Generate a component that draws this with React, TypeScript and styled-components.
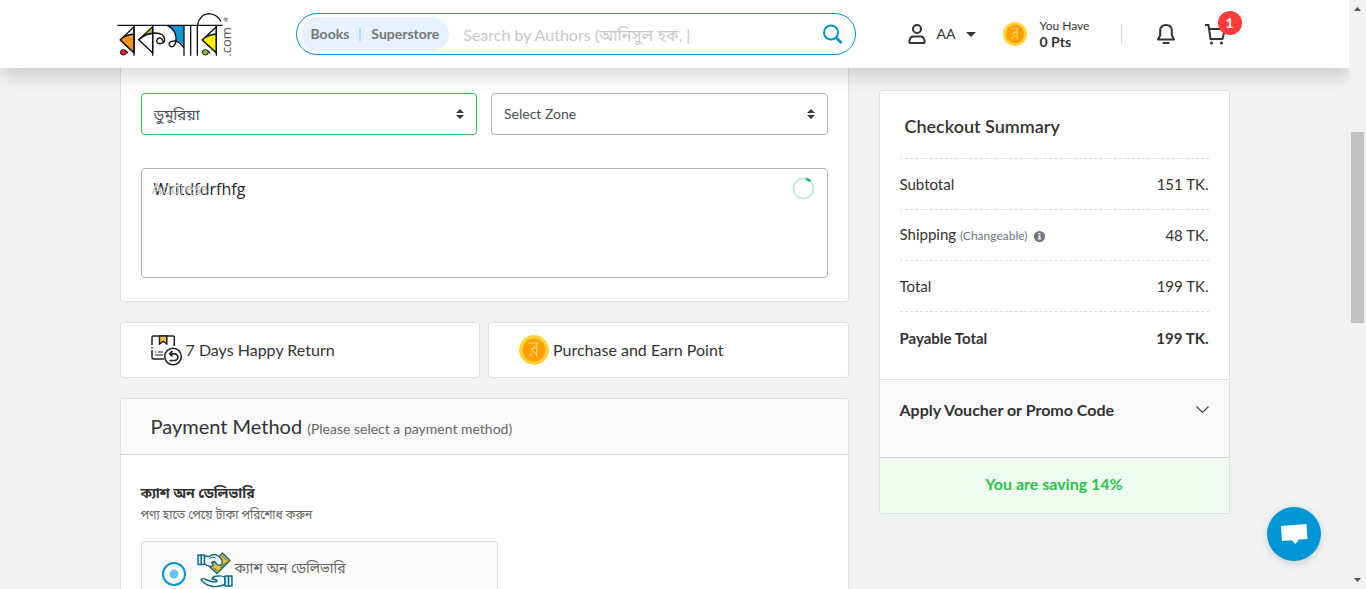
import React from "react";
import styled, { createGlobalStyle } from "styled-components";

const Global = createGlobalStyle`
  *, *::before, *::after { box-sizing: border-box; }
  body {
    margin: 0;
    background: #f1f2f4;
    color: #333;
    font-family: Lato, "Noto Sans Bengali", "Noto Sans", sans-serif;
    font-size: 16px;
    line-height: 24px;
  }
  h1, h2, h3, p { margin: 0; font-weight: 400; }
  button, input, select, textarea { font: inherit; color: inherit; margin: 0; }
  button { border: 0; padding: 0; background: none; cursor: pointer; }
  a { color: inherit; text-decoration: none; }
  svg { display: block; flex: none; }
`;

const Shell = styled.div`
  display: flex;
  height: 100vh;
  overflow: hidden;
`;

const Page = styled.div`
  flex: 1;
  min-width: 0;
  overflow: hidden;
`;

/* header */

const Header = styled.header`
  position: relative;
  z-index: 2;
  background: #fff;
  box-shadow: 0 8px 16px rgba(0, 0, 0, 0.15);
`;

const HeaderInner = styled.div`
  display: flex;
  align-items: center;
  max-width: 1116px;
  height: 68px;
  margin: 0 auto;
`;

const Search = styled.form`
  flex: 1;
  display: flex;
  align-items: center;
  min-width: 0;
  height: 42px;
  margin: 0 52px 0 62px;
  padding: 0 12px 0 4px;
  border: 1px solid #0095d5;
  border-radius: 21px;
`;

const Scopes = styled.div`
  display: flex;
  align-items: center;
  gap: 10px;
  height: 34px;
  padding: 0 10px;
  border-radius: 17px;
  background: #e6f2ff;
  color: #777;
  font-size: 14px;
  font-weight: 700;
`;

const ScopeRule = styled.span`
  width: 2px;
  height: 13px;
  background: #b3d4fc;
`;

const SearchInput = styled.input`
  flex: 1;
  min-width: 0;
  height: 38px;
  padding: 0 14px;
  border: 0;
  outline: 0;
  background: none;
  &::placeholder { color: #c8c8c8; opacity: 1; }
`;

const Actions = styled.div`
  display: flex;
  align-items: center;
`;

const UserButton = styled.button`
  display: flex;
  align-items: center;
  width: 67px;
  margin-right: 28px;
  gap: 11px;
  font-size: 14px;
`;

const Caret = styled.span`
  margin-left: auto;
  border: 5px solid transparent;
  border-top: 5px solid #333;
  border-bottom: 0;
`;

const Points = styled.a`
  display: flex;
  align-items: center;
  width: 118px;
  gap: 13px;
  font-size: 12px;
  line-height: 16px;
`;

const PointsValue = styled.strong`
  display: block;
  font-size: 14px;
`;

const ActionRule = styled.span`
  width: 1px;
  height: 20px;
  margin-right: 35px;
  background: #d8d8d8;
`;

const CartButton = styled.button`
  position: relative;
  margin: 0 7px 0 30px;
`;

const Badge = styled.span`
  position: absolute;
  top: -12px;
  right: -16px;
  width: 24px;
  height: 24px;
  border-radius: 50%;
  background: #ff3b3b;
  color: #fff;
  font-size: 14px;
  font-weight: 700;
  line-height: 23px;
`;

/* page columns */

const Columns = styled.main`
  display: grid;
  grid-template-columns: minmax(0, 1fr) 351px;
  gap: 30px;
  align-items: start;
  max-width: 1110px;
  margin: 0 auto;
`;

const Stack = styled.div`
  display: grid;
  gap: 20px;
`;

const Card = styled.section`
  border: 1px solid #dedfe1;
  border-radius: 3px;
  background: #fff;
`;

const AddressCard = styled(Card)`
  border-top: 0;
  border-radius: 0 0 3px 3px;
  padding: 25px 20px 23px;
`;

const FieldRow = styled.div`
  display: grid;
  grid-template-columns: 1fr 1fr;
  gap: 14px;
  margin-bottom: 33px;
`;

const SelectWrap = styled.div`
  position: relative;
`;

const Select = styled.select<{ $valid?: boolean }>`
  display: block;
  width: 100%;
  height: 42px;
  padding: 0 40px 0 12px;
  appearance: none;
  border: 1px solid ${(p) => (p.$valid ? "#2dbe4a" : "#b0b0b0")};
  border-radius: 4px;
  background: #fff;
  color: #495057;
  font-size: ${(p) => (p.$valid ? "15px" : "14px")};
`;

const SelectArrow = styled.svg`
  position: absolute;
  top: 16px;
  right: 13px;
  pointer-events: none;
`;

const AddressWrap = styled.div`
  position: relative;
`;

const AddressText = styled.textarea`
  display: block;
  width: 100%;
  height: 110px;
  padding: 8px 12px;
  border: 1px solid #b0b0b0;
  border-radius: 4px;
  resize: none;
  color: #212529;
  font-family: "Open Sans", sans-serif;
`;

const AddressLabel = styled.label`
  position: absolute;
  top: 8px;
  left: 11px;
  color: #c8c8c8;
  pointer-events: none;
`;

const Spinner = styled.svg`
  position: absolute;
  top: 9px;
  right: 13px;
`;

const Perks = styled.div`
  display: grid;
  grid-template-columns: 1fr 1fr;
  gap: 8px;
`;

const Perk = styled(Card)`
  display: flex;
  align-items: center;
  gap: 4px;
  height: 56px;
  padding: 0 30px;
`;

const CardHead = styled.div`
  display: flex;
  align-items: baseline;
  gap: 5px;
  height: 56px;
  padding: 15px 30px 0;
  border-bottom: 1px solid #dedfe1;
  background: #fafafa;
`;

const CardTitle = styled.h2`
  font-size: 20px;
`;

const CardHint = styled.span`
  color: #666;
  font-size: 14px;
`;

const PayBody = styled.div`
  padding: 26px 20px;
`;

const PayName = styled.h3`
  font-size: 14px;
  font-weight: 700;
`;

const PayNote = styled.p`
  color: #666;
  font-size: 12px;
  line-height: 20px;
`;

const PayOption = styled.label`
  display: flex;
  width: 357px;
  max-width: 100%;
  margin-top: 16px;
  padding: 10px 20px 14px;
  border: 1px solid #dedfe1;
  border-radius: 3px;
  background: #fafafa;
  color: #666;
`;

const Radio = styled.input`
  appearance: none;
  width: 24px;
  height: 24px;
  margin: 10px 11px 0 0;
  border: 2px solid #0095d5;
  border-radius: 50%;
  background: #fff radial-gradient(circle, #6ac1e9 4px, transparent 5px);
`;

const PayLabel = styled.span`
  margin: 4px 0 0 2px;
  font-size: 14px;
`;

/* checkout summary */

const Summary = styled(Card)`
  margin-top: 22px;
  overflow: hidden;
`;

const SummaryTitle = styled.h2`
  padding: 23px 25px 20px;
  font-size: 18px;
  font-weight: 600;
`;

const Totals = styled.table`
  width: calc(100% - 40px);
  margin: 0 20px 14px;
  border-collapse: collapse;
  font-size: 15px;
  th, td {
    height: 51px;
    padding: 0;
    border-top: 1px dashed #dcdfe2;
    font-weight: 400;
    text-align: left;
  }
  td { text-align: right; }
  tr:last-child > * {
    height: 53px;
    font-weight: 700;
  }
`;

const Changeable = styled.span`
  display: inline-flex;
  align-items: center;
  gap: 6px;
  color: #6c757d;
  font-size: 12px;
`;

const Voucher = styled.button`
  display: flex;
  align-items: center;
  justify-content: space-between;
  width: 100%;
  height: 78px;
  padding: 0 20px 16px;
  border-top: 1px solid #dedfe1;
  background: #f8f9fb;
  font-weight: 700;
`;

const Saving = styled.p`
  height: 56px;
  padding-top: 14px;
  border-top: 1px solid #d0dcd4;
  background: #effdf1;
  color: #2dc24c;
  font-weight: 700;
  text-align: center;
`;

/* window furniture */

const Chat = styled.button`
  position: fixed;
  right: 45px;
  bottom: 28px;
  display: grid;
  place-items: center;
  width: 54px;
  height: 54px;
  border-radius: 50%;
  background: #0095d5;
  box-shadow: 0 2px 8px rgba(0, 0, 0, 0.15);
`;

const ScrollTrack = styled.div`
  display: flex;
  flex-direction: column;
  align-items: center;
  width: 17px;
  padding: 7px 0;
  background: #f1f1f1;
`;

const ScrollThumb = styled.div`
  width: 13px;
  height: 191px;
  margin: 121px 0 auto;
  background: #c1c1c1;
`;

const ScrollArrow = ({ down }: { down?: boolean }) => (
  <svg width="7" height="4" viewBox="0 0 7 4">
    <path d={down ? "M0 0h7L3.5 4z" : "M0 4h7L3.5 0z"} fill="#505050" />
  </svg>
);

const Logo = () => (
  <svg width="117" height="45" viewBox="52 35 351 135" overflow="visible" role="img" aria-label="Rokomari.com">
    <g stroke="#111" strokeWidth="4" fill="none" strokeLinejoin="round">
      <path d="M103 79 62 119 103 157z" fill="#fff" />
      <path d="M62 119Q74 104 103 101V157z" fill="#f7941d" />
      <path d="M103 77V166" />
      <path d="M159 79 117 118 159 157z" fill="#fff" />
      <path d="M159 80 132 105Q144 99 159 100z" fill="#8cc63f" strokeWidth="3" />
      <path d="M117 118Q140 99 165 98Q196 98 195 120Q190 132 177 130Q167 124 174 115Q184 110 188 118Q188 125 196 124M159 77V166" />
      <path d="M201 76H253V137Q241 121 229 122Q234 98 201 76z" fill="#0f97d7" stroke="none" />
      <path d="M204 76Q231 88 229 121Q226 141 214 139Q203 131 213 124Q236 116 252 142M253 77V166" />
      <path d="M273 77V166M293 166V76Q299 42 327 40Q352 41 364 64" />
      <path d="M350 79 308 119 350 157z" fill="#fff" />
      <path d="M308 119Q320 104 350 101V157z" fill="#fff200" />
      <path d="M350 77V166M53 75H369" />
      <ellipse cx="71" cy="156" rx="9" ry="8" fill="#ed1c24" strokeWidth="3" />
      <path d="M78 151Q86 153 84 160" strokeWidth="3" />
      <ellipse cx="317" cy="156" rx="9" ry="8" fill="#8cc63f" strokeWidth="3" />
      <path d="M324 151Q332 153 330 160" strokeWidth="3" />
    </g>
    <text transform="translate(395 169) rotate(-90)" fontSize="39" fontFamily="Open Sans, sans-serif" fill="#555">.com</text>
    <text x="371" y="64" fontSize="18" fill="#333">®</text>
  </svg>
);

const Coin = ({ size }: { size: number }) => (
  <svg width={size} height={size} viewBox="0 0 24 24">
    <circle cx="12" cy="12" r="12" fill="#ffd43b" />
    <circle cx="12" cy="12" r="9.2" fill="#ff9f00" />
    <circle cx="12" cy="12" r="8.8" fill="none" stroke="#f7ab1b" strokeWidth=".6" />
    <path d="M7.500 6.400h8.200M14.200 6.400V17.500M14.200 7.500 9.800 11.600 14.200 15.800M9.800 11.600l4.400-1.800M10.600 16a1 1 0 1 1-.2-.9" fill="none" stroke="#ffe3a0" strokeWidth=".7" />
  </svg>
);

const ReturnIcon = () => (
  <svg width="31" height="31" viewBox="0 0 31 31" fill="none" stroke="#222" strokeWidth="1.5">
    <path d="M1 10V2.200Q1 1 2.200 1H22Q23.300 1 23.300 2.200V11M1 12v1.500M1 15V22.500Q1 24 2.500 24H13" />
    <path d="M8.500 1H15.800V9L12.200 6.200 8.500 9z" fill="#fbc02d" />
    <path d="M4 17h1.500M7 17h5M4 20h8" strokeWidth="1.100" />
    <circle cx="22" cy="21.500" r="8.300" fill="#fff" />
    <path d="M18.500 25.500H23.500A3.300 3.300 0 0 0 23.500 18.800H19M21.500 16 18.700 18.800 21.500 21.500" strokeWidth="1.700" />
  </svg>
);

const CashIcon = () => (
  <svg width="36" height="36" viewBox="0 0 36 36" fill="none" stroke="#17657f" strokeWidth="1.400" strokeLinejoin="round" strokeLinecap="round">
    <path d="M14 13 25.500 1 33 8.500 20 21.500 13 15z" fill="#f4bf27" />
    <path d="M25.500 4 30 8.500M17 16 20 18.800M29 10.500 23.500 16" strokeWidth="1" />
    <path d="M7 4 12 4.500Q16 1.500 19.500 3L23 5.500Q26 8 25 12Q23 14.500 20 12.500L17.500 9.500 14.500 10.500Q18 13.500 14.500 14.500Q11 15 7 11.500z" fill="#eef9fd" />
    <path d="M12.500 6.500Q15 4 18 5.500" strokeWidth="1" />
    <path d="M1 3H7.500V12.500H1zM4.200 3V12.500" fill="#c9eefa" />
    <path d="M4 28Q5 25.500 9 27.500L14 29.500Q19 30.500 20 29Q19 27 15 27Q16 24 21 24Q25 23.500 28 25.500V32.500Q22 35 16 34.500Q9 33.500 4 28z" fill="#eef9fd" />
    <path d="M28 24H35V34H28zM31.500 24V34" fill="#c9eefa" />
  </svg>
);

const UpDown = () => (
  <SelectArrow width="8" height="10" viewBox="0 0 8 10">
    <path d="M0 4 4 0 8 4zM0 6 4 10 8 6z" fill="#343a40" />
  </SelectArrow>
);

export default function App() {
  return (
    <Shell>
      <Global />
      <Page>
        <Header>
          <HeaderInner>
            <a href="#home"><Logo /></a>
            <Search role="search" onSubmit={(e) => e.preventDefault()}>
              <Scopes>
                <a href="#books">Books</a>
                <ScopeRule />
                <a href="#superstore">Superstore</a>
              </Scopes>
              <SearchInput type="text" aria-label="Search" placeholder="Search by Authors (আনিসুল হক, |" />
              <button type="submit" aria-label="Search">
                <svg width="21" height="21" viewBox="0 0 21 21" fill="none" stroke="#0095d5" strokeWidth="2">
                  <circle cx="9" cy="8.500" r="7" />
                  <path d="m14 13.500 5.500 5.500" strokeWidth="2.600" />
                </svg>
              </button>
            </Search>
            <Actions>
              <UserButton type="button">
                <svg width="18" height="20" viewBox="0 0 18 20" fill="none" stroke="#333" strokeWidth="2">
                  <circle cx="9" cy="5" r="4" />
                  <path d="M5.500 12.500h7q3 0 3.700 3l.5 1.500q.3 2-1.700 2H3q-2 0-1.700-2l.5-1.500q.7-3 3.700-3z" />
                </svg>
                AA
                <Caret />
              </UserButton>
              <Points href="#points">
                <Coin size={24} />
                <span>You Have<PointsValue>0 Pts</PointsValue></span>
              </Points>
              <ActionRule />
              <button type="button" aria-label="Notifications">
                <svg width="18" height="22" viewBox="0 0 18 22" fill="none" stroke="#333" strokeWidth="2">
                  <path d="M1 16.500h16l-2.200-4.200V7.500Q14.500 2 9 2T3.200 7.500v4.800z" strokeLinejoin="round" />
                  <path d="M6.500 20h5" strokeLinecap="round" />
                </svg>
              </button>
              <CartButton type="button" aria-label="Cart, 1 item">
                <svg width="21" height="22" viewBox="0 0 21 22" fill="none" stroke="#333" strokeWidth="2">
                  <path d="M0 2h3.500L5.500 16H17.500L20 6H5" strokeLinejoin="round" />
                  <circle cx="6.500" cy="20" r="1.500" fill="#333" stroke="none" />
                  <circle cx="16.500" cy="20" r="1.500" fill="#333" stroke="none" />
                </svg>
                <Badge>1</Badge>
              </CartButton>
            </Actions>
          </HeaderInner>
        </Header>
        <Columns>
          <Stack>
            <AddressCard>
              <FieldRow>
                <SelectWrap>
                  <Select $valid aria-label="Area" defaultValue="dumuria">
                    <option value="dumuria">ডুমুরিয়া</option>
                  </Select>
                  <UpDown />
                </SelectWrap>
                <SelectWrap>
                  <Select aria-label="Zone" defaultValue="">
                    <option value="">Select Zone</option>
                  </Select>
                  <UpDown />
                </SelectWrap>
              </FieldRow>
              <AddressWrap>
                <AddressText id="address" defaultValue="Writdfdrfhfg" spellCheck={false} />
                <AddressLabel htmlFor="address">Address</AddressLabel>
                <Spinner width="23" height="23" viewBox="0 0 23 23" fill="none" strokeWidth="2">
                  <circle cx="11.500" cy="11.500" r="10" stroke="#c9eee1" />
                  <path d="M14 1.800A10 10 0 0 1 18.300 4.300" stroke="#15bd7c" strokeWidth="2.500" />
                </Spinner>
              </AddressWrap>
            </AddressCard>
            <Perks>
              <Perk><ReturnIcon />7 Days Happy Return</Perk>
              <Perk><Coin size={30} />Purchase and Earn Point</Perk>
            </Perks>
            <Card>
              <CardHead>
                <CardTitle>Payment Method</CardTitle>
                <CardHint>(Please select a payment method)</CardHint>
              </CardHead>
              <PayBody>
                <PayName>ক্যাশ অন ডেলিভারি</PayName>
                <PayNote>পণ্য হাতে পেয়ে টাকা পরিশোধ করুন</PayNote>
                <PayOption>
                  <Radio type="radio" name="payment" defaultChecked />
                  <CashIcon />
                  <PayLabel>ক্যাশ অন ডেলিভারি</PayLabel>
                </PayOption>
              </PayBody>
            </Card>
          </Stack>
          <Summary>
            <SummaryTitle>Checkout Summary</SummaryTitle>
            <Totals>
              <tbody>
                <tr><th scope="row">Subtotal</th><td>151 TK.</td></tr>
                <tr>
                  <th scope="row">
                    Shipping{" "}
                    <Changeable>
                      (Changeable)
                      <svg width="11" height="11" viewBox="0 0 11 11">
                        <circle cx="5.500" cy="5.500" r="5.500" fill="#6c757d" />
                        <path d="M4.500 2h2v1.500h-2zM4 4.500h2.500v3h.7v1H4v-1h.7v-2H4z" fill="#fff" />
                      </svg>
                    </Changeable>
                  </th>
                  <td>48 TK.</td>
                </tr>
                <tr><th scope="row">Total</th><td>199 TK.</td></tr>
                <tr><th scope="row">Payable Total</th><td>199 TK.</td></tr>
              </tbody>
            </Totals>
            <Voucher type="button">
              Apply Voucher or Promo Code
              <svg width="13" height="8" viewBox="0 0 13 8" fill="none" stroke="#444" strokeWidth="1.200">
                <path d="m.5.500 6 6 6-6" />
              </svg>
            </Voucher>
            <Saving>You are saving 14%</Saving>
          </Summary>
        </Columns>
        <Chat type="button" aria-label="Chat">
          <svg width="28" height="22" viewBox="0 0 28 22">
            <path d="M1 3 26.500 1 27.500 16 19 16.500 15.500 21 11.500 17.200 2 18z" fill="#fff" />
          </svg>
        </Chat>
      </Page>
      <ScrollTrack aria-hidden="true">
        <ScrollArrow />
        <ScrollThumb />
        <ScrollArrow down />
      </ScrollTrack>
    </Shell>
  );
}
